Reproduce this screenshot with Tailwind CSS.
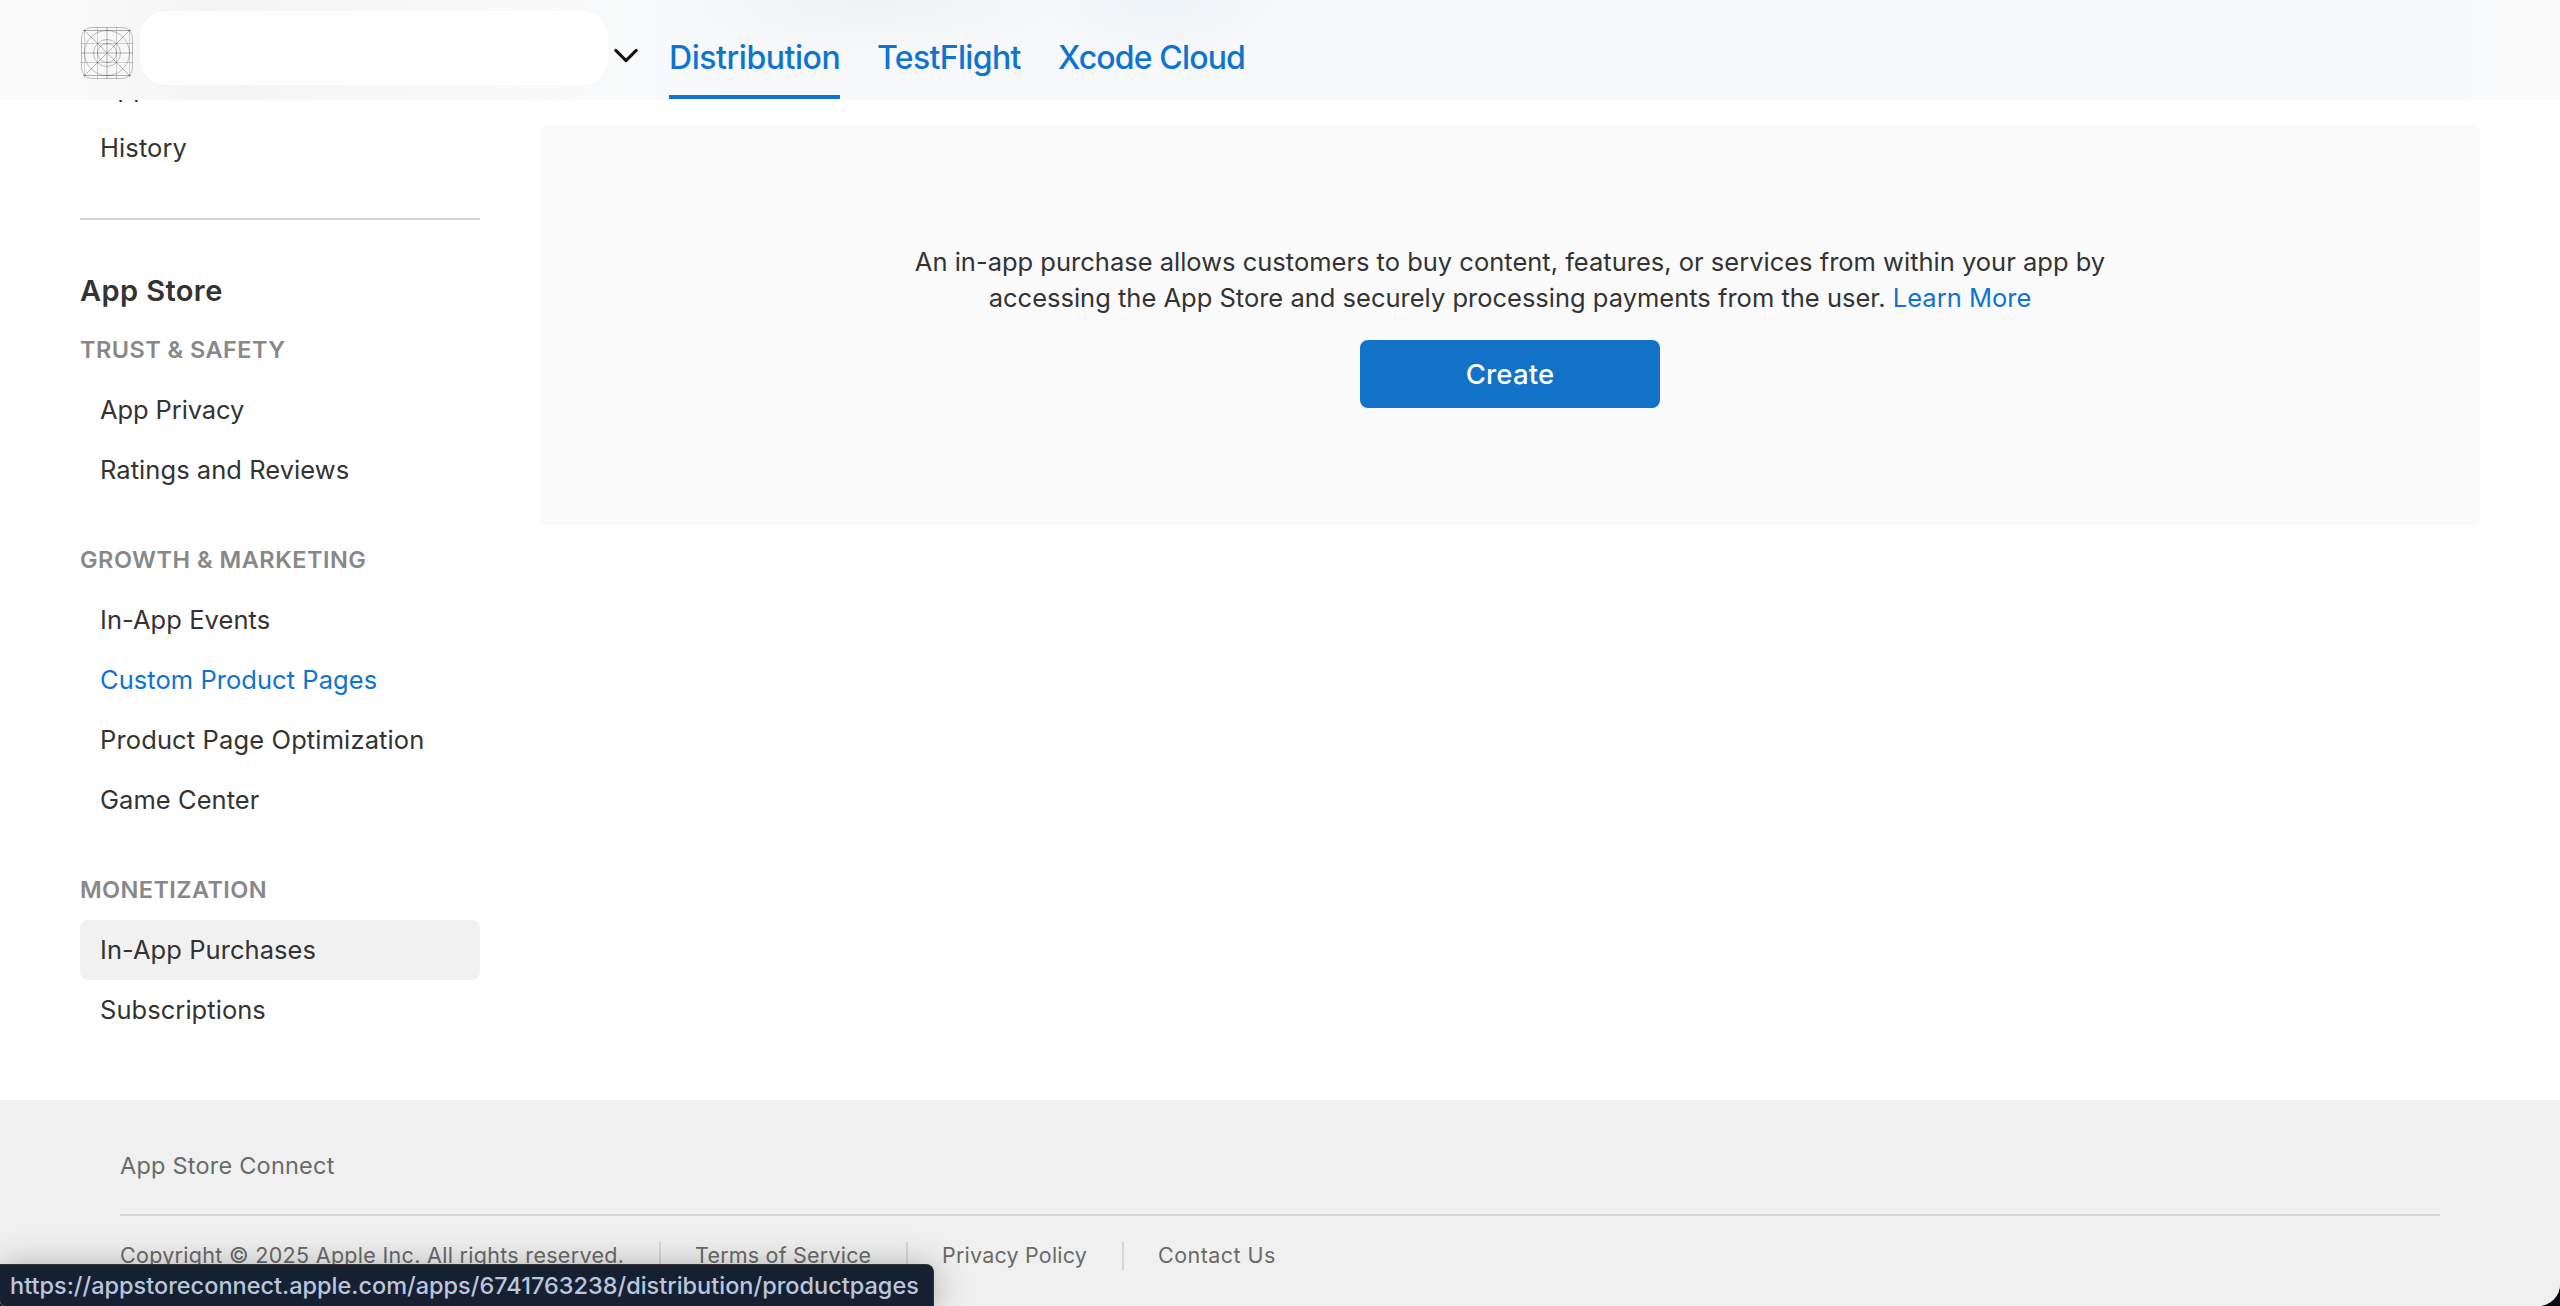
<!DOCTYPE html>
<html lang="en">
<head>
<meta charset="utf-8">
<title>App Store Connect</title>
<script src="https://cdn.jsdelivr.net/npm/@tailwindcss/browser@4"></script>
</head>
<body class="bg-[#0b0714] font-['Inter',sans-serif] text-[#333333] antialiased">
<div class="relative flex h-[1306px] w-[2560px] flex-col overflow-hidden rounded-br-[22px] rounded-bl-[5px] bg-white">

  <header class="relative z-10 flex h-[100px] shrink-0 items-start bg-linear-to-r from-[#fafafa] from-20% via-[#f6f8fa] via-30% to-[#f6f8fb] to-92% pl-[81px] whitespace-nowrap">
    <div class="absolute inset-0 bg-linear-to-r from-[#fafafa] from-2% via-[#f5f5f5] via-8% to-transparent to-25%"></div>
    <div class="absolute top-0 right-0 h-full w-[120px] bg-linear-to-r from-transparent to-[#fafafa] to-60%"></div>
    <div class="absolute top-0 left-[660px] h-[56px] w-[420px] bg-[radial-gradient(ellipse_at_top,#f1f2f4,transparent_70%)]"></div>
    <div class="absolute top-0 left-[1040px] h-[56px] w-[240px] bg-[radial-gradient(ellipse_at_top,#eff4f8,transparent_70%)]"></div>
    <!-- placeholder app icon -->
    <svg class="relative mt-[27px] size-[52px] shrink-0" viewBox="0 0 52 52" fill="none" stroke="#000" stroke-opacity=".17" stroke-width="1">
      <rect x=".5" y=".5" width="51" height="51" rx="10.5" stroke-opacity=".24"/>
      <path d="M3.5 1.5v49M48.5 1.5v49M16.5 0v52M35.5 0v52M0 16.5h52M0 35.5h52"/>
      <path d="M2 3.5h48M2 48.5h48" stroke-opacity=".3"/>
      <path d="M26 0v52M0 26h52" stroke-width="2" stroke-opacity=".14"/>
      <path d="M3 3l46 46M49 3L3 49" stroke-opacity=".28"/>
      <g stroke-opacity=".24"><circle cx="26" cy="26" r="22.5"/><circle cx="26" cy="26" r="13.5"/><circle cx="26" cy="26" r="9.5"/></g>
    </svg>
    <div class="relative mt-[11px] ml-[7px] h-[74px] w-[468px] shrink-0 rounded-[26px] bg-white"></div>
    <svg class="relative mt-[48px] ml-[6px] h-[16px] w-[24px] shrink-0" viewBox="0 0 24 16" fill="none" stroke="#111" stroke-width="3" stroke-linecap="round" stroke-linejoin="round"><path d="M1.8 2.4 12 12.6 22.2 2.4"/></svg>
    <nav class="relative ml-[31px] flex gap-[37px] text-[32px] leading-[40px] font-medium text-[#0f73d2]">
      <a class="h-[99px] w-[171px] border-b-4 border-[#0f73d2] pt-[38px] tracking-[-0.45px]">Distribution</a>
      <a class="w-[144px] pt-[38px] tracking-[-0.65px]">TestFlight</a>
      <a class="pt-[38px] tracking-[-0.85px]">Xcode Cloud</a>
    </nav>
  </header>

  <div class="flex h-[1000px] shrink-0 pl-[80px]">
    <aside class="-mt-[42px] w-[400px] shrink-0 text-[25.5px] leading-[60px] whitespace-nowrap">
      <a class="block pl-[20px]">App Review</a>
      <a class="block pl-[20px] tracking-[0.1px]">History</a>
      <div class="mt-[40px] mb-[40px] h-[2px] bg-[#d6d6d6]"></div>
      <h2 class="h-[60px] pt-px text-[29px] font-semibold tracking-[0.4px]">App Store</h2>
      <h3 class="text-[23.5px] font-semibold tracking-[0.45px] text-[#888888]">TRUST &amp; SAFETY</h3>
      <a class="block pl-[20px] tracking-[-0.1px]">App Privacy</a>
      <a class="block pl-[20px] tracking-[0.05px]">Ratings and Reviews</a>
      <h3 class="mt-[30px] text-[23.5px] font-semibold tracking-[0.5px] text-[#888888]">GROWTH &amp; MARKETING</h3>
      <a class="block pl-[20px] tracking-[0.06px]">In-App Events</a>
      <a class="block pl-[20px] tracking-[0.05px] text-[#0f73d2]">Custom Product Pages</a>
      <a class="block pl-[20px] tracking-[0.13px]">Product Page Optimization</a>
      <a class="block pl-[20px] tracking-[0.05px]">Game Center</a>
      <h3 class="mt-[30px] text-[23.5px] font-semibold tracking-[0.4px] text-[#888888]">MONETIZATION</h3>
      <a class="block rounded-lg bg-[#f1f1f1] pl-[20px] tracking-[0.06px]">In-App Purchases</a>
      <a class="block pl-[20px] tracking-[0.05px]">Subscriptions</a>
    </aside>

    <main class="mt-[25px] ml-[60px] flex h-[400px] w-[1940px] flex-col items-center rounded-lg bg-[#fafafa] pt-[119px]">
      <p class="text-center text-[25.5px] leading-[36px] whitespace-nowrap">An in-app purchase allows customers to buy content, features, or services from within your app by<br>accessing the App Store and securely processing payments from the user. <a class="text-[#0f73d2]">Learn More</a></p>
      <button class="mt-[24px] h-[68px] w-[300px] rounded-lg bg-[#1272c8] pt-[2px] text-[27.5px] font-medium tracking-[0.15px] text-white">Create</button>
    </main>
  </div>

  <footer class="flex-1 bg-[#f0f0f0] px-[120px] whitespace-nowrap text-[#6a6a6a]">
    <div class="flex h-[116px] items-center border-b-2 border-[#d6d6d6] pt-[18px] text-[23.5px] tracking-[0.22px]">App Store Connect</div>
    <div class="mt-[26px] flex h-[28px] items-center text-[21.5px] leading-[26px] tracking-[0.2px]">
      <span class="w-[539px] pb-[2px] tracking-[0.3px]">Copyright © 2025 Apple Inc. All rights reserved.</span>
      <span class="flex h-[28px] w-[247px] items-center border-l-2 border-[#d6d6d6] pb-[2px] pl-[34px]">Terms of Service</span>
      <span class="flex h-[28px] w-[216px] items-center border-l-2 border-[#d6d6d6] pb-[2px] pl-[34px]">Privacy Policy</span>
      <span class="flex h-[28px] items-center border-l-2 border-[#d6d6d6] pb-[2px] pl-[34px] tracking-[0.45px]">Contact Us</span>
    </div>
  </footer>

  <!-- link target shown over the page -->
  <div class="absolute bottom-0 left-0 flex h-[42px] w-[934px] items-center rounded-tr-lg border-t border-r border-[#333] bg-[#162031] pl-[10px] text-[23.5px] font-medium whitespace-nowrap text-[#bac6de] shadow-[0_4px_36px_rgba(0,0,0,0.32)]">https://appstoreconnect.apple.com/apps/6741763238/distribution/productpages</div>
</div>
</body>
</html>
